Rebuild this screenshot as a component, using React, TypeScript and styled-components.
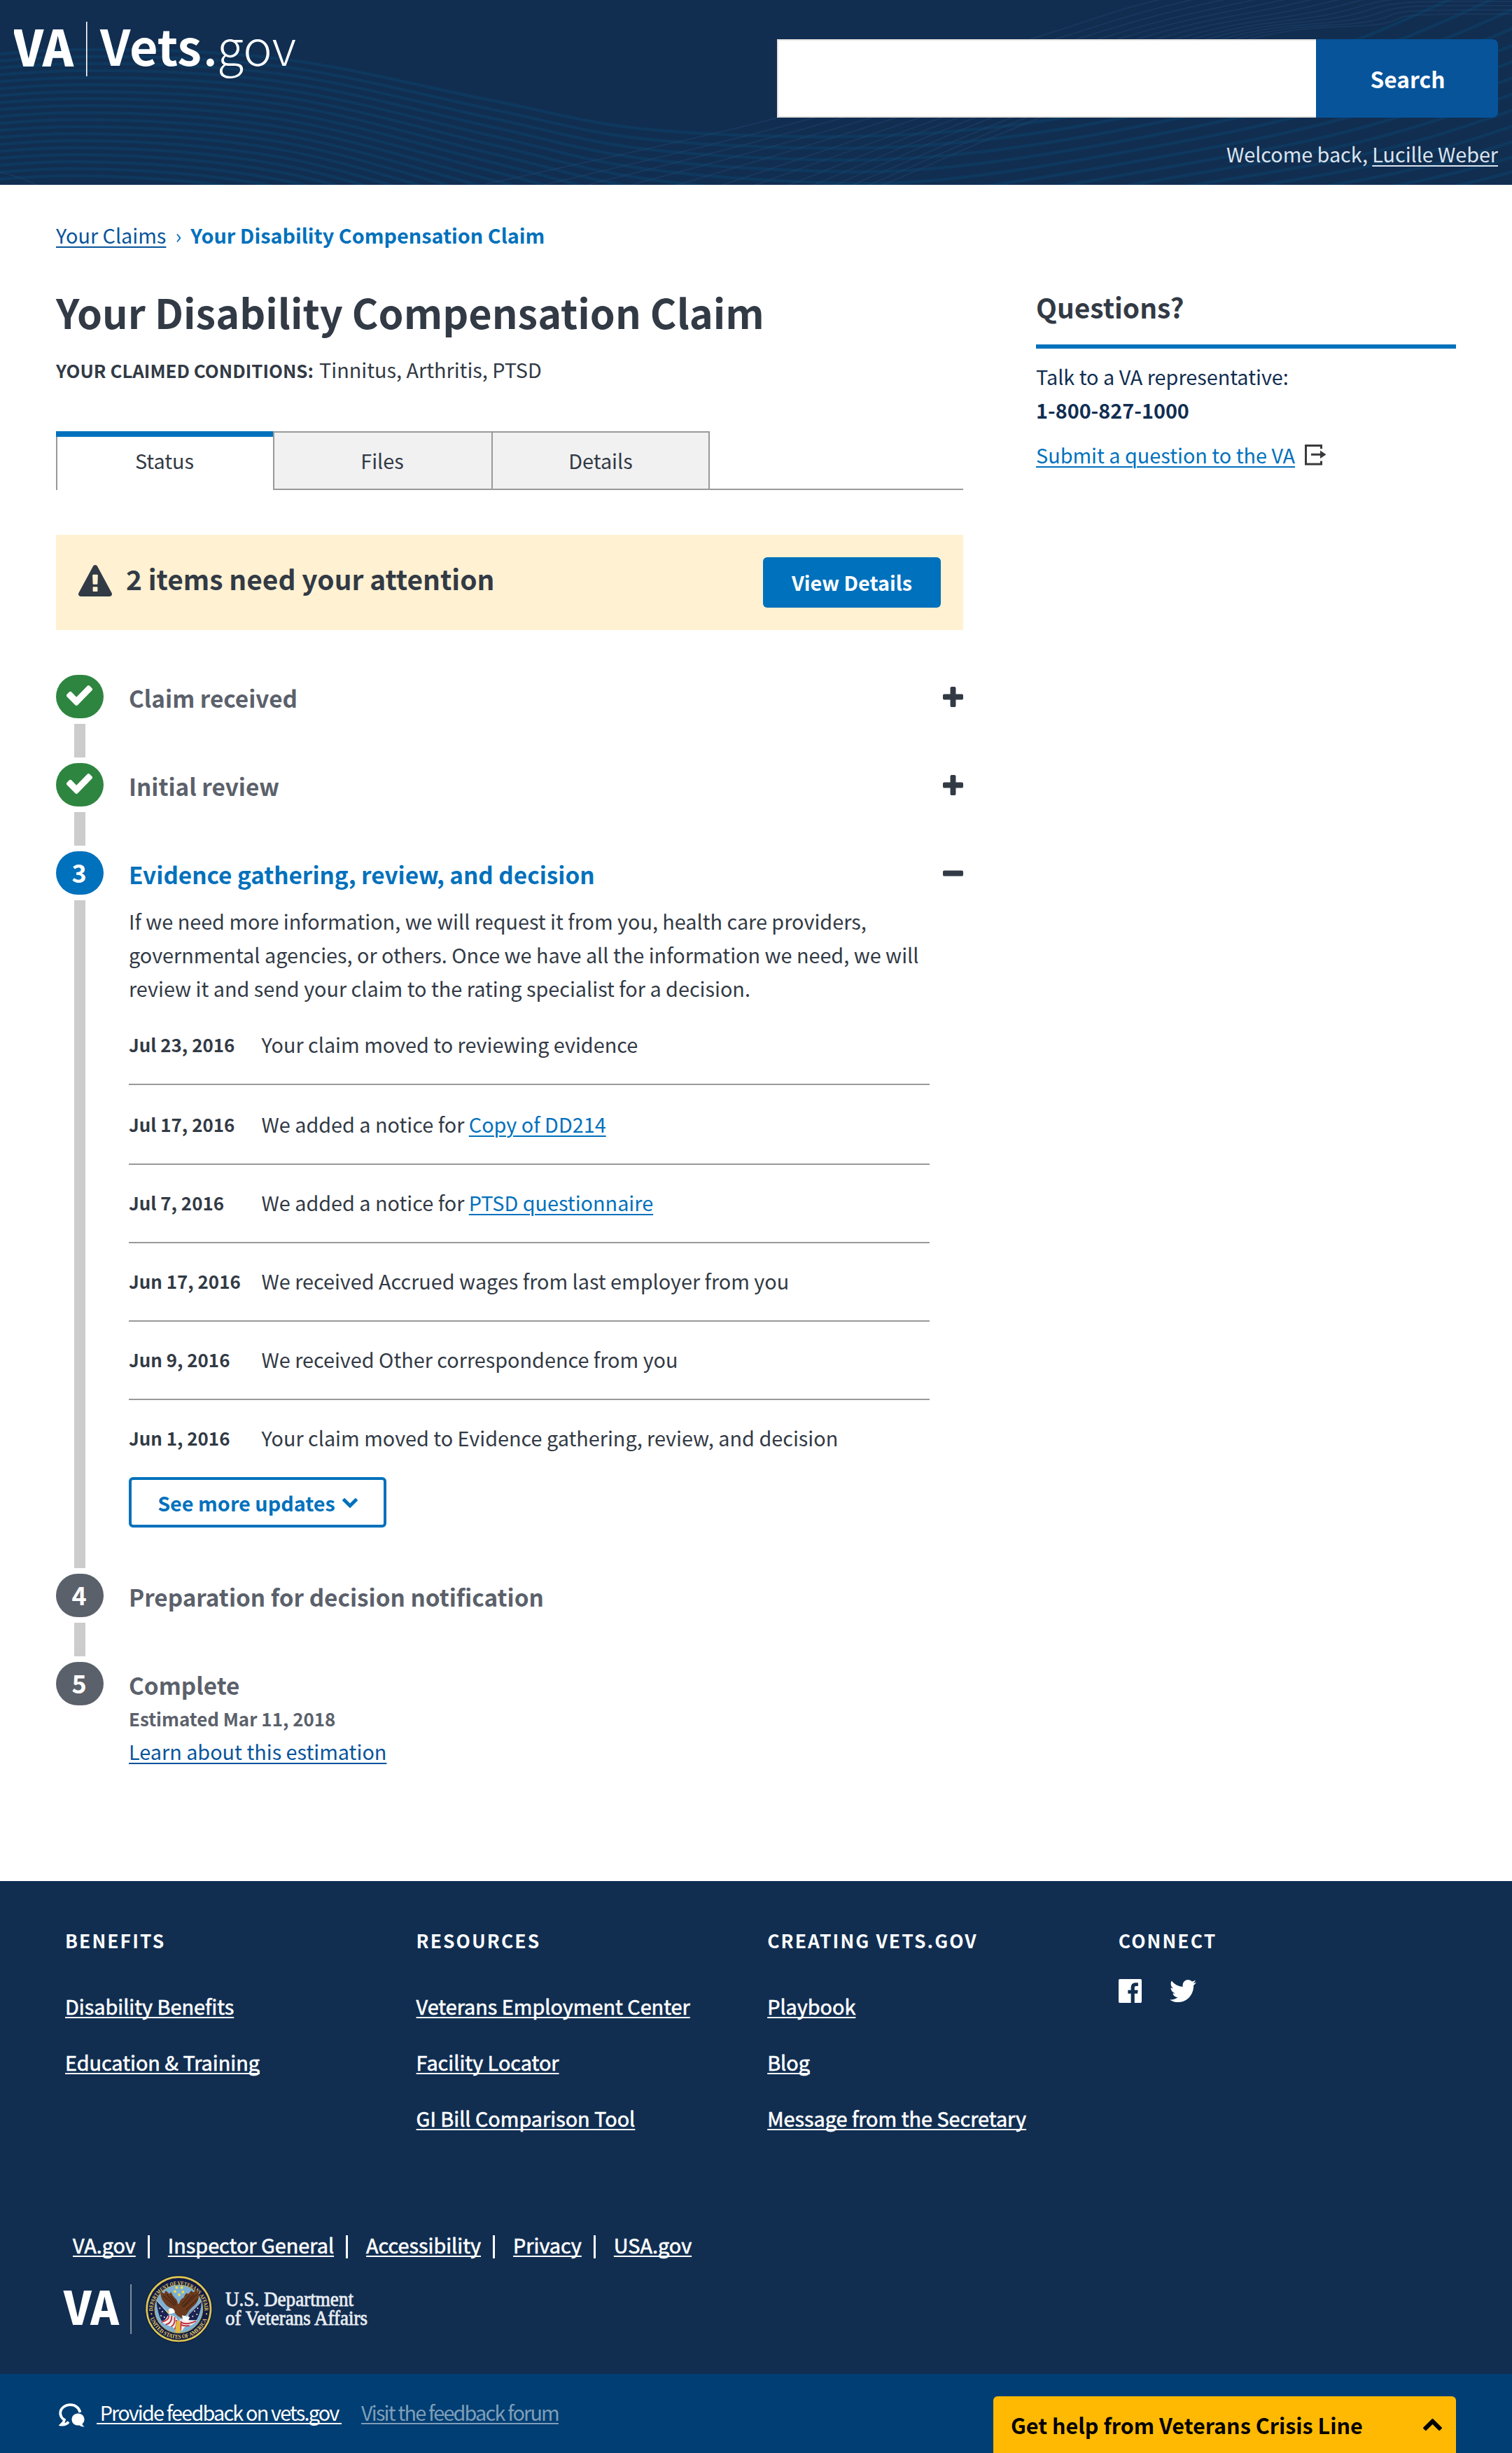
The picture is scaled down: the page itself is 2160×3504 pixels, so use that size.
import React from "react";
import styled, { createGlobalStyle } from "styled-components";

const sans = `"Noto Sans CJK SC", "Source Sans Pro", "Noto Sans", sans-serif`;

const GlobalStyle = createGlobalStyle`
  * { box-sizing: border-box; }
  body {
    margin: 0;
    background: #fff;
    color: #323a45;
    font-family: ${sans};
    font-size: 28.8px;
    line-height: 48px;
  }
  h1, h2, h3, p, ul, ol { margin: 0; padding: 0; }
  ul, ol { list-style: none; }
  button, input { font-family: inherit; }
`;

/* ---------- Icons ---------- */

const icons = {
  warning:
    "M1024 1375v-190q0-14-9.5-23.5t-22.5-9.5h-192q-13 0-22.5 9.5t-9.5 23.5v190q0 14 9.5 23.5t22.5 9.5h192q13 0 22.5-9.5t9.5-23.5zm-2-374l18-459q0-12-10-19-13-11-24-11h-220q-11 0-24 11-10 7-10 21l17 457q0 10 10 16.5t24 6.5h185q14 0 23.5-6.5t10.5-16.5zm-14-934l768 1408q35 63-2 126-17 29-46.5 46t-63.5 17h-1536q-34 0-63.5-17t-46.5-46q-37-63-2-126l768-1408q17-31 47-49t65-18 65 18 47 49z",
  check:
    "M1671 566q0 40-28 68l-724 724-136 136q-28 28-68 28t-68-28l-136-136-362-362q-28-28-28-68t28-68l136-136q28-28 68-28t68 28l294 295 656-657q28-28 68-28t68 28l136 136q28 28 28 68z",
  plus: "M1600 736v192q0 40-28 68t-68 28h-416v416q0 40-28 68t-68 28h-192q-40 0-68-28t-28-68v-416h-416q-40 0-68-28t-28-68v-192q0-40 28-68t68-28h416v-416q0-40 28-68t68-28h192q40 0 68 28t28 68v416h416q40 0 68 28t28 68z",
  minus:
    "M1600 736v192q0 40-28 68t-68 28h-1216q-40 0-68-28t-28-68v-192q0-40 28-68t68-28h1216q40 0 68 28t28 68z",
  down: "M1683 808l-742 741q-19 19-45 19t-45-19l-742-741q-19-19-19-45.5t19-45.5l166-165q19-19 45-19t45 19l531 531 531-531q19-19 45-19t45 19l166 165q19 19 19 45.5t-19 45.5z",
  up: "M1683 1331l-166 165q-19 19-45 19t-45-19l-531-531-531 531q-19 19-45 19t-45-19l-166-165q-19-19-19-45.5t19-45.5l742-741q19-19 45-19t45 19l742 741q19 19 19 45.5t-19 45.5z",
  twitter:
    "M1684 408q-67 98-162 167 1 14 1 42 0 130-38 259.5t-115.5 248.5-184.5 210.5-258 146-323 54.5q-271 0-496-145 35 4 78 4 225 0 401-138-105-2-188-64.5t-114-159.5q33 5 61 5 43 0 85-11-112-23-185.5-111.5t-73.5-205.5v-4q68 38 146 41-66-44-105-115t-39-154q0-88 44-163 121 149 294.5 238.5t371.5 99.5q-8-38-8-74 0-134 94.5-228.5t228.5-94.5q140 0 236 102 109-21 205-78-37 115-142 178 93-10 186-50z",
  facebook:
    "M1579 128q35 0 60 25t25 60v1366q0 35-25 60t-60 25h-391v-595h199l30-232h-229v-148q0-56 23.5-84t91.5-28l122-1v-207q-63-9-178-9-136 0-217.5 80t-81.5 226v171h-200v232h200v595h-735q-35 0-60-25t-25-60v-1366q0-35 25-60t60-25h1366z",
};

const Glyph = ({ name, box, width, height }: { name: keyof typeof icons; box: string; width: number; height: number }) => (
  <svg width={width} height={height} viewBox={box} fill="currentColor" preserveAspectRatio="none" aria-hidden>
    <path d={icons[name]} />
  </svg>
);

/* ---------- Header ---------- */

const Header = styled.header`
  position: relative;
  height: 264px;
  background: #112e51;
  color: #dce4ef;
  display: flex;
  justify-content: space-between;
  padding: 0 20px;
`;
const Waves = styled.svg`
  position: absolute;
  inset: 0;
  width: 2160px;
  height: 264px;
`;
const Brand = styled.svg`
  position: relative;
  font-family: ${sans};
  fill: #fff;
`;
const HeaderTools = styled.div`
  position: relative;
  display: flex;
  flex-direction: column;
  align-items: flex-end;
  width: 1030px;
  padding-top: 56px;
`;
const SearchForm = styled.form`
  display: flex;
  width: 100%;
  height: 112px;
`;
const SearchInput = styled.input`
  flex: 1;
  min-width: 0;
  border: 2px solid #e4e2e0;
  border-right: 0;
  border-radius: 0;
  background: #fff;
  padding: 0 20px;
  font-size: 32px;
`;
const SearchButton = styled.button`
  width: 260px;
  border: 0;
  border-radius: 0 8px 8px 0;
  background: #07549b;
  color: #fff;
  font-size: 31.7px;
  font-weight: 700;
  line-height: 48px;
  padding: 0 0 0 2px;
`;
const Welcome = styled.p`
  margin-top: 28px;
  letter-spacing: -0.05px;
`;
const Link = styled.a<{ $color?: string }>`
  color: ${(p) => p.$color || "#0071bc"};
  text-decoration: underline;
  text-decoration-thickness: 2px;
  text-underline-offset: 4px;
`;

type Pt = [number, number];
const smooth = (pts: Pt[]) => {
  let d = `M${pts[0][0]} ${pts[0][1]}`;
  for (let i = 0; i < pts.length - 1; i++) {
    const a = pts[i - 1] || pts[i];
    const b = pts[i];
    const c = pts[i + 1];
    const e = pts[i + 2] || c;
    d += `C${b[0] + (c[0] - a[0]) / 6} ${b[1] + (c[1] - a[1]) / 6} ${c[0] - (e[0] - b[0]) / 6} ${c[1] - (e[1] - b[1]) / 6} ${c[0]} ${c[1]}`;
  }
  return d;
};
const broadWaves = Array.from({ length: 19 }, (_, i) =>
  smooth([
    [-160, 92 + i * 10],
    [110, 71 + i * 10],
    [400, 84 + i * 10.8],
    [700, 143 + i * 12.6],
    [900, 182 + i * 14],
    [1130, 195 + i * 16],
    [1330, 190 + i * 17],
    [1530 + i * 18, 166 + i * 13],
    [1750 + i * 34, 114 + i * 11],
    [1940 + i * 56, 56 + i * 2],
    [2100 + i * 56, -14 + i * 2],
  ])
);
/* x positions of each fine line at the foot of the banner, at mid height and above the search box */
const fineFoot = [690, 778, 840, 902, 968, 1033, 1080, 1128, 1163, 1194, 1218, 1242, 1262];
const fineMid = [1111, 1163, 1204, 1245, 1280, 1314, 1345, 1369, 1393, 1417, 1445, 1466, 1486];
const fineTop = [1472, 1507, 1538, 1569, 1597, 1624, 1652, 1679, 1703, 1724, 1745, 1765, 1785];
const fineWaves = fineFoot.map((foot, j) =>
  smooth([
    [foot - (fineMid[j] - foot) * 0.4, 300],
    [foot, 264],
    [fineMid[j], 168],
    [fineTop[j], 56],
    [fineTop[j] + 208 - j * 2, -6 + j * 3.4],
    [1960 + j * 5, -50 + j * 6],
    [2170, -52 + j * 6],
  ])
);

const HeaderWaves = () => (
  <Waves viewBox="0 0 2160 264" fill="none" aria-hidden>
    <g stroke="#0e3a60" strokeWidth="4.5" opacity=".85">
      {broadWaves.map((d, i) => (
        <path key={i} d={d} />
      ))}
    </g>
    <g stroke="#2b4c78" strokeWidth="2" opacity=".3">
      {fineWaves.map((d, i) => (
        <path key={i} d={d} />
      ))}
      <path d="M-10 244Q26 250 60 268" />
    </g>
  </Waves>
);

/* ---------- Main ---------- */

const Main = styled.main`
  padding: 48px 80px 0;
  height: 2423px;
`;
const Breadcrumb = styled.nav`
  display: flex;
  height: 47px;
  color: #07549b;
`;
const Chevron = styled.span`
  width: 35px;
  text-align: center;
  color: #0071bc;
`;
const Current = styled.span`
  color: #0071bc;
  font-weight: 700;
`;
const Columns = styled.div`
  display: flex;
  gap: 104px;
`;
const Content = styled.section`
  width: 1296px;
`;
const Title = styled.h1`
  margin-top: 50px;
  font-size: 57.6px;
  line-height: 72px;
`;
const Conditions = styled.p`
  display: flex;
  height: 48px;
  margin-top: 23px;
`;
const ConditionsLabel = styled.strong`
  width: 376px;
  font-size: 25.92px;
  line-height: 49px;
`;
const TabBar = styled.div`
  display: flex;
  height: 84px;
  margin-top: 64px;
`;
const Tab = styled.div<{ $active?: boolean; $w: number; $last?: boolean }>`
  width: ${(p) => p.$w}px;
  text-align: center;
  border-top: ${(p) => (p.$active ? "8px solid #0071bc" : "2px solid #999")};
  padding-top: ${(p) => (p.$active ? 10 : 16)}px;
  background: ${(p) => (p.$active ? "#fff" : "#f1f1f1")};
  box-shadow: inset 2px 0 #999, ${(p) => (p.$last ? "inset -2px 0 #999," : "")}
    inset 0 ${(p) => (p.$active ? 0 : -2)}px #999;
`;
const TabRest = styled.div`
  flex: 1;
  border-bottom: 2px solid #999;
`;
const Alert = styled.div`
  display: flex;
  align-items: flex-start;
  height: 136px;
  margin-top: 64px;
  padding: 32px 32px 0;
  background: #fff1d2;
`;
const AlertIcon = styled.span`
  display: flex;
  width: 68px;
  padding-top: 11px;
`;
const AlertText = styled.h2`
  flex: 1;
  font-size: 38.88px;
  line-height: 48px;
  margin-top: 6px;
`;
const PrimaryButton = styled.button`
  width: 254px;
  height: 72px;
  border: 0;
  border-radius: 6px;
  background: #0071bc;
  color: #fff;
  font-size: 28.8px;
  font-weight: 700;
  line-height: 48px;
  padding: 0;
`;
const Steps = styled.ol`
  margin-top: 64px;
`;
const StepRow = styled.li`
  display: flex;
  min-height: 126px;
`;
const Rail = styled.div`
  display: flex;
  flex-direction: column;
  align-items: center;
  width: 68px;
  margin-right: 36px;
`;
const Marker = styled.div<{ $color: string }>`
  display: flex;
  justify-content: center;
  align-items: center;
  width: 68px;
  height: 62px;
  border-radius: 32px;
  background: ${(p) => p.$color};
  color: #fff;
  font-size: 36px;
  font-weight: 700;
  line-height: 56px;
  padding: 0 2px 4px 0;
`;
const Bar = styled.div`
  flex: 1;
  width: 16px;
  margin: 8px 0;
  background: #ccc;
`;
const StepBody = styled.div<{ $pb?: number }>`
  flex: 1;
  padding: 8px 0 ${(p) => p.$pb || 0}px;
`;
const StepHead = styled.div`
  display: flex;
  justify-content: space-between;
  align-items: center;
  height: 48px;
`;
const StepTitle = styled.h3<{ $active?: boolean }>`
  padding-top: 2px;
  font-size: 33.3px;
  line-height: 48px;
  color: ${(p) => (p.$active ? "#0071bc" : "#5b616b")};
`;
const Toggle = styled.span`
  display: flex;
  margin-bottom: 2px;
  color: #323a45;
`;
const Description = styled.p`
  margin: 20px 0 32px;
`;
const Event = styled.li`
  display: flex;
  width: 1144px;
  padding: 30px 0 32px;
  border-bottom: 2px solid #999;
  &:first-child {
    padding-top: 0;
  }
  &:nth-child(2) {
    padding-top: 32px;
  }
  &:last-child {
    padding-bottom: 0;
    border: 0;
  }
`;
const EventDate = styled.strong`
  width: 189.5px;
  font-size: 25.92px;
`;
const OutlineButton = styled.button`
  display: flex;
  justify-content: center;
  align-items: center;
  gap: 10px;
  width: 368px;
  height: 72px;
  margin-top: 32px;
  border: 4px solid #0071bc;
  border-radius: 6px;
  background: #fff;
  color: #0071bc;
  font-size: 28.8px;
  font-weight: 700;
  line-height: 48px;
  padding: 1px 0 0;
`;
const Estimate = styled.p`
  height: 47px;
  margin-top: 1px;
  font-size: 25.92px;
  font-weight: 700;
  color: #5b616b;
`;
const Aside = styled.aside`
  width: 600px;
  padding-top: 56px;
  color: #112e51;
`;
const AsideTitle = styled.h2`
  height: 83px;
  border-bottom: 6px solid #0071bc;
  color: #323a45;
  font-size: 38.88px;
  line-height: 46px;
  margin-bottom: 16px;
`;
const ExternalLine = styled.p`
  display: flex;
  align-items: center;
  gap: 13px;
  margin-top: 16px;
`;

type StepProps = { n: React.ReactNode; color: string; title: string; active?: boolean; toggle?: "plus" | "minus"; last?: boolean; pb?: number; children?: React.ReactNode };
const Step = ({ n, color, title, active, toggle, last, pb, children }: StepProps) => (
  <StepRow>
    <Rail>
      <Marker $color={color}>{n}</Marker>
      {!last && <Bar />}
    </Rail>
    <StepBody $pb={pb}>
      <StepHead>
        <StepTitle $active={active}>{title}</StepTitle>
        {toggle && (
          <Toggle>
            <Glyph name={toggle} box="192 128 1408 1408" width={29} height={29} />
          </Toggle>
        )}
      </StepHead>
      {children}
    </StepBody>
  </StepRow>
);

const events: { date: string; text: string; link?: string }[] = [
  { date: "Jul 23, 2016", text: "Your claim moved to reviewing evidence" },
  { date: "Jul 17, 2016", text: "We added a notice for ", link: "Copy of DD214" },
  { date: "Jul 7, 2016", text: "We added a notice for ", link: "PTSD questionnaire" },
  { date: "Jun 17, 2016", text: "We received Accrued wages from last employer from you" },
  { date: "Jun 9, 2016", text: "We received Other correspondence from you" },
  { date: "Jun 1, 2016", text: "Your claim moved to Evidence gathering, review, and decision" },
];

const Check = () => <Glyph name="check" box="121 334 1550 1188" width={37} height={29} />;

/* ---------- Footer ---------- */

const Footer = styled.footer`
  height: 704px;
  padding: 65px 93px 0;
  background: #112e51;
  color: #fff;
`;
const FooterColumns = styled.div`
  display: grid;
  grid-template-columns: repeat(4, 501.6px);
  height: 431px;
`;
const FooterHeading = styled.h3`
  font-size: 26.4px;
  line-height: 40px;
  letter-spacing: 2.1px;
  margin-bottom: 50px;
`;
const FooterList = styled.ul`
  display: grid;
  gap: 32px;
`;
const FooterLink = styled.a`
  color: #fff;
  text-decoration: underline;
  text-decoration-thickness: 2px;
  text-decoration-skip-ink: none;
  text-underline-offset: 3px;
  -webkit-text-stroke: 0.6px #fff;
`;
const Social = styled.div`
  display: flex;
  align-items: center;
  gap: 40px;
  margin-top: -15px;
`;
const LegalRow = styled.ul`
  display: flex;
  height: 48px;
  margin-left: 11px;
`;
const LegalItem = styled.li`
  display: flex;
  align-items: center;
  &:not(:last-child)::after {
    content: "";
    width: 3px;
    height: 33px;
    margin: 5px 26px 0 17px;
    background: #fff;
  }
`;
const Agency = styled.div`
  display: flex;
  height: 112px;
  margin: 6px 0 0 -1px;
`;
const AgencyMark = styled.svg`
  display: block;
  overflow: visible;
`;
const AgencyName = styled.svg`
  display: block;
  overflow: visible;
  font-family: "Liberation Serif", serif;
  font-size: 29.5px;
  fill: #e8ecf1;
  stroke: #e8ecf1;
  stroke-width: 0.8px;
`;
const FeedbackBar = styled.div`
  display: flex;
  align-items: flex-start;
  justify-content: space-between;
  height: 113px;
  padding: 0 80px 0 84px;
  background: #003e73;
`;
const FeedbackLinks = styled.div`
  display: flex;
  padding-top: 31px;
  color: #fff;
`;
const FeedbackLink = styled.a<{ $muted?: boolean }>`
  white-space: pre;
  color: ${(p) => (p.$muted ? "#7f9eb9" : "#fff")};
  margin-right: 28px;
  letter-spacing: -1.8px;
  text-decoration: underline;
  text-decoration-thickness: 2px;
  text-decoration-skip-ink: none;
  text-underline-offset: 3px;
`;
const BubbleIcon = styled.svg`
  margin: 11px 17px 0 0;
`;
const CrisisLine = styled.div`
  display: flex;
  align-items: center;
  justify-content: space-between;
  width: 661px;
  height: 81px;
  margin-top: 32px;
  padding: 0 20px 0 25px;
  border-radius: 6px 6px 0 0;
  background: #ffb903;
  color: #000;
  font-size: 30.5px;
  font-weight: 700;
`;

const footerColumns = [
  { title: "BENEFITS", links: ["Disability Benefits", "Education & Training"] },
  { title: "RESOURCES", links: ["Veterans Employment Center", "Facility Locator", "GI Bill Comparison Tool"] },
  { title: "CREATING VETS.GOV", links: ["Playbook", "Blog", "Message from the Secretary"] },
];

const Seal = () => (
  <g transform="scale(.33333)">
    <circle cx="526" cy="175" r="144" fill="#0b1532" />
    <circle cx="526" cy="175" r="137" fill="#121a44" stroke="#dcc756" strokeWidth="8" />
    <circle cx="526" cy="175" r="103" fill="#7db0d2" stroke="#b9a94f" strokeWidth="3" />
    <path id="sealTop" d="M415 184A111 111 0 1 1 637 184" fill="none" />
    <path id="sealBottom" d="M401 205A129 129 0 0 0 651 205" fill="none" />
    <g fill="#e0cb66" fontFamily="Liberation Serif, serif" fontWeight="700" fontSize="25">
      <text>
        <textPath href="#sealTop" textLength="358" lengthAdjust="spacingAndGlyphs">DEPARTMENT OF VETERANS AFFAIRS</textPath>
      </text>
      <text>
        <textPath href="#sealBottom" startOffset="10" textLength="316" lengthAdjust="spacingAndGlyphs">UNITED STATES OF AMERICA</textPath>
      </text>
      <circle cx="409" cy="196" r="3.500" />
      <circle cx="645" cy="196" r="3.500" />
    </g>
    <g fill="#efd94e">
      <circle cx="517" cy="83" r="6" />
      <circle cx="539" cy="83" r="6" />
      <circle cx="510" cy="100" r="6" />
      <circle cx="544" cy="102" r="6" />
      <circle cx="528" cy="114" r="6" />
    </g>
    <path d="M430 137L486 200 474 226 452 226Q434 190 430 137Z" fill="#1c2350" />
    <path d="M624 142L568 196 570 222 602 222Q622 190 624 142Z" fill="#1c2350" />
    <path d="M430 137L500 215M624 142L556 212" stroke="#d9dfe6" strokeWidth="3" />
    <g fill="#e9ecf2">
      <circle cx="445" cy="172" r="3" />
      <circle cx="456" cy="186" r="3" />
      <circle cx="450" cy="204" r="3" />
      <circle cx="464" cy="210" r="3" />
      <circle cx="607" cy="172" r="3" />
      <circle cx="594" cy="184" r="3" />
      <circle cx="604" cy="198" r="3" />
      <circle cx="586" cy="206" r="3" />
    </g>
    <path d="M478 204Q505 196 520 220L524 268Q506 262 498 250Q470 246 450 228Q470 226 478 204Z" fill="#f3eeec" />
    <path d="M530 218L566 222Q590 226 604 222Q594 240 574 246Q548 246 542 268L524 268Z" fill="#f3eeec" />
    <g stroke="#c03342" strokeWidth="6" fill="none">
      <path d="M484 204Q482 226 452 230M496 204Q498 236 470 242M508 210Q512 240 494 250M516 222Q518 250 508 262" />
      <path d="M536 232Q560 246 600 226M534 242Q552 250 572 246M536 226L534 266" />
    </g>
    <path d="M516 226L530 226 534 274 522 278 510 272Z" fill="#e3b93c" />
    <path d="M449 97Q456 108 466 108Q466 96 474 98Q480 108 488 110Q490 100 494 104Q500 120 510 128Q522 138 522 152L528 152Q532 132 548 126Q552 112 560 106Q564 114 572 106Q580 92 584 98Q588 108 598 96Q604 90 606 98Q616 112 611 128Q606 150 588 164Q572 176 562 196Q552 206 540 214Q520 208 508 190Q504 178 494 172Q474 164 464 148Q446 130 449 97Z" fill="#6b3a1e" />
    <path d="M460 118L508 160M474 112L514 158M492 120L516 150M604 112L548 166M590 114L540 168M572 118L536 158M608 132L556 180" stroke="#452412" strokeWidth="3.500" />
    <path d="M482 184Q482 170 496 172Q508 176 510 190Q500 194 490 196L478 192Z" fill="#fff" />
    <path d="M474 184L486 184 482 196Z" fill="#e7b93a" />
    <path d="M540 202L574 210 562 228 544 222Z" fill="#fff" />
  </g>
);

export default function App() {
  return (
    <>
      <GlobalStyle />
      <Header>
        <HeaderWaves />
        <Brand width="440" height="140" viewBox="0 -24 440 140">
          <text x="-1" y="70.5" fontSize="71" fontWeight="900" textLength="86" lengthAdjust="spacingAndGlyphs">VA</text>
          <rect x="103" y="7" width="1.6" height="78" />
          <text x="123" y="70" fontSize="69.5" fontWeight="700" textLength="145" lengthAdjust="spacingAndGlyphs">Vets</text>
          <text x="270" y="70" fontSize="69.5" fontWeight="500">.</text>
          <text x="290" y="70" fontSize="69.5" fontWeight="300" textLength="113" lengthAdjust="spacingAndGlyphs">gov</text>
        </Brand>
        <HeaderTools>
          <SearchForm>
            <SearchInput aria-label="Search" />
            <SearchButton type="button">Search</SearchButton>
          </SearchForm>
          <Welcome>
            Welcome back, <Link $color="#dce4ef">Lucille Weber</Link>
          </Welcome>
        </HeaderTools>
      </Header>

      <Main>
        <Breadcrumb>
          <Link $color="#07549b">Your Claims</Link>
          <Chevron>›</Chevron>
          <Current>Your Disability Compensation Claim</Current>
        </Breadcrumb>
        <Columns>
          <Content>
            <Title>Your Disability Compensation Claim</Title>
            <Conditions>
              <ConditionsLabel>YOUR CLAIMED CONDITIONS:</ConditionsLabel>
              Tinnitus, Arthritis, PTSD
            </Conditions>
            <TabBar>
              <Tab $active $w={310}>Status</Tab>
              <Tab $w={312}>Files</Tab>
              <Tab $w={312} $last>Details</Tab>
              <TabRest />
            </TabBar>
            <Alert>
              <AlertIcon>
                <Glyph name="warning" box="0 0 1792 1664" width={48} height={45} />
              </AlertIcon>
              <AlertText>2 items need your attention</AlertText>
              <PrimaryButton>View Details</PrimaryButton>
            </Alert>
            <Steps>
              <Step n={<Check />} color="#2e8540" title="Claim received" toggle="plus" />
              <Step n={<Check />} color="#2e8540" title="Initial review" toggle="plus" />
              <Step n="3" color="#0071bc" title="Evidence gathering, review, and decision" active toggle="minus" pb={66}>
                <Description>
                  If we need more information, we will request it from you, health care providers,
                  <br />
                  governmental agencies, or others. Once we have all the information we need, we will
                  <br />
                  review it and send your claim to the rating specialist for a decision.
                </Description>
                <ul>
                  {events.map((e) => (
                    <Event key={e.date}>
                      <EventDate>{e.date}</EventDate>
                      <span>
                        {e.text}
                        {e.link && <Link>{e.link}</Link>}
                      </span>
                    </Event>
                  ))}
                </ul>
                <OutlineButton>
                  See more updates
                  <Glyph name="down" box="90 533 1612 1035" width={22} height={14} />
                </OutlineButton>
              </Step>
              <Step n="4" color="#5b616b" title="Preparation for decision notification" />
              <Step n="5" color="#5b616b" title="Complete" last>
                <Estimate>Estimated Mar 11, 2018</Estimate>
                <Link $color="#07549b">Learn about this estimation</Link>
              </Step>
            </Steps>
          </Content>
          <Aside>
            <AsideTitle>Questions?</AsideTitle>
            <p>Talk to a VA representative:</p>
            <p>
              <strong>1-800-827-1000</strong>
            </p>
            <ExternalLine>
              <Link>Submit a question to the VA</Link>
              <svg width="32" height="30" viewBox="0 0 32 30" fill="none" stroke="#3a3a3c" strokeWidth="3" aria-hidden>
                <path d="M24.5 6V1.5H2.5V28H24.5V23.5M10 14.2H25" />
                <path d="M23 8.5L31.5 14.2L23 20Z" fill="#3a3a3c" stroke="none" />
              </svg>
            </ExternalLine>
          </Aside>
        </Columns>
      </Main>

      <Footer>
        <FooterColumns>
          {footerColumns.map((c) => (
            <div key={c.title}>
              <FooterHeading>{c.title}</FooterHeading>
              <FooterList>
                {c.links.map((l) => (
                  <li key={l}>
                    <FooterLink>{l}</FooterLink>
                  </li>
                ))}
              </FooterList>
            </div>
          ))}
          <div>
            <FooterHeading>CONNECT</FooterHeading>
            <Social>
              <Glyph name="facebook" box="128 128 1536 1536" width={33} height={34} />
              <Glyph name="twitter" box="108 256 1576 1280" width={38} height={32} />
            </Social>
          </div>
        </FooterColumns>
        <LegalRow>
          {["VA.gov", "Inspector General", "Accessibility", "Privacy", "USA.gov"].map((l) => (
            <LegalItem key={l}>
              <FooterLink>{l}</FooterLink>
            </LegalItem>
          ))}
        </LegalRow>
        <Agency>
          <AgencyMark width="110" height="112" viewBox="0 -12 110 112" fill="#fff">
            <text x="-1" y="72" fontFamily="Noto Sans CJK SC" fontSize="65.5" fontWeight="900" textLength="79" lengthAdjust="spacingAndGlyphs">VA</text>
            <rect x="94.2" y="14" width="1.8" height="71" fill="#8796a8" />
          </AgencyMark>
          <AgencyMark width="120" height="112" viewBox="122 -3 120 112">
            <Seal />
          </AgencyMark>
          <AgencyName width="210" height="112" viewBox="230 -12 210 112">
            <text x="230" y="44.5" textLength="183" lengthAdjust="spacingAndGlyphs">U.S. Department</text>
            <text x="230" y="72" textLength="203" lengthAdjust="spacingAndGlyphs">of Veterans Affairs</text>
          </AgencyName>
        </Agency>
      </Footer>
      <FeedbackBar>
        <FeedbackLinks>
          <BubbleIcon width="37" height="34" viewBox="0 0 37 34" aria-hidden>
            <path d="M30.5 13C29 6 23 2.2 16.5 2.2C8.500 2.200 2.200 7.500 2.200 14C2.200 18 4.500 21.500 8 23.700C7.500 27 5 29 3.500 30.500C8 31 12 29 14 26.500" fill="none" stroke="#fff" strokeWidth="3.800" />
            <path d="M27.500 14.500C33 14.500 36.500 18.500 36.500 23C36.500 25.800 35.300 28 33.500 29.500C33.800 31.300 35 32.500 36.800 33.300C34 33.800 31.300 33 29.500 31.500C23 32.300 18.500 28.500 18.500 23C18.500 18.500 22 14.500 27.500 14.500Z" fill="#fff" />
          </BubbleIcon>
          <FeedbackLink>{" Provide feedback on vets.gov "}</FeedbackLink>
          <FeedbackLink $muted>Visit the feedback forum</FeedbackLink>
        </FeedbackLinks>
        <CrisisLine>
          Get help from Veterans Crisis Line
          <Glyph name="up" box="90 480 1612 1035" width={27} height={17} />
        </CrisisLine>
      </FeedbackBar>
    </>
  );
}
